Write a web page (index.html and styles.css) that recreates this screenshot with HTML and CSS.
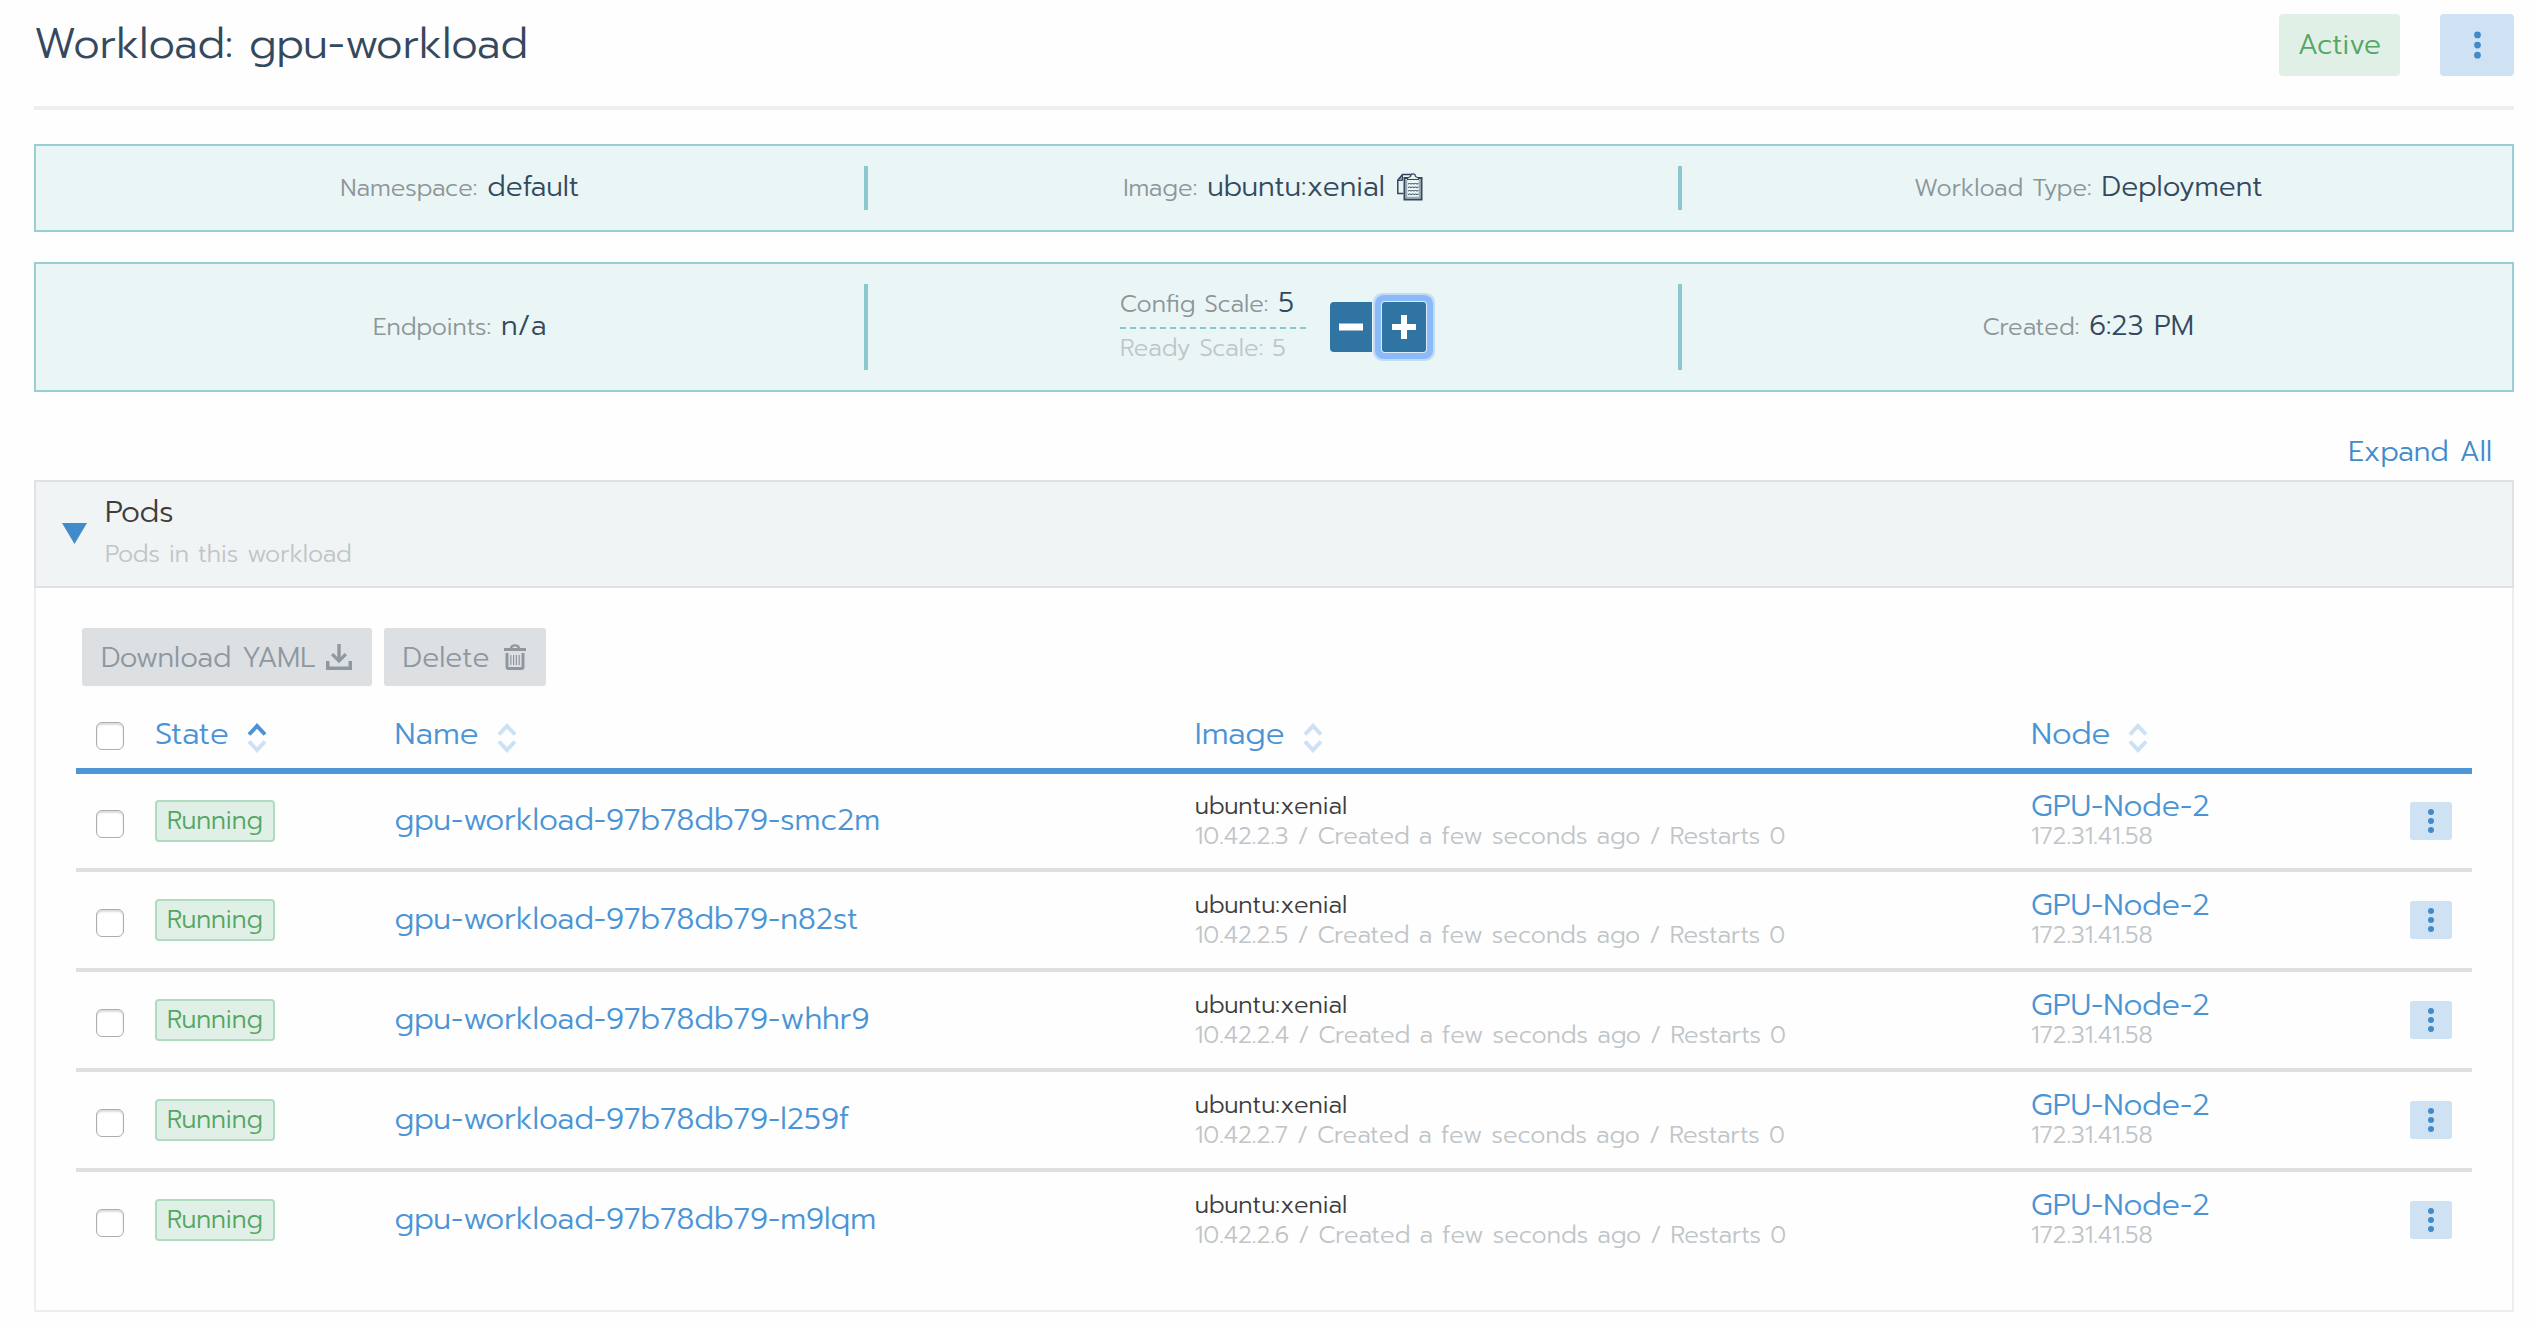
FILE: index.html
```html
<!DOCTYPE html>
<html lang="en">
<head>
<meta charset="utf-8">
<title>Workload: gpu-workload</title>
<meta name="viewport" content="width=device-width, initial-scale=1">
<link rel="stylesheet" href="styles.css">
</head>
<body>
<svg class="sprite" aria-hidden="true">
  <symbol id="dots" viewBox="0 0 8 28"><circle cx="4" cy="5" r="3"/><circle cx="4" cy="14" r="3"/><circle cx="4" cy="23" r="3"/></symbol>
  <symbol id="sort" viewBox="0 0 20 30"><path class="up" d="M2 11.500 10 3l8 8.500" fill="none" stroke-width="4"/><path class="down" d="M2 18.500 10 27l8-8.500" fill="none" stroke-width="4"/></symbol>
</svg>
<main class="page">
  <header class="page-header">
    <h1 class="title">Workload: gpu-workload</h1>
    <span class="state-active">Active</span>
    <button class="menu menu-large" type="button" aria-label="Workload actions"><svg class="dots dots-large"><use href="#dots"/></svg></button>
  </header>

  <section class="banner">
    <div class="cell"><div class="pair"><span class="label">Namespace:</span><span class="value">default</span></div></div>
    <div class="cell"><div class="pair"><span class="label">Image:</span><span class="value">ubuntu:xenial</span>
      <button class="copy" type="button" aria-label="Copy image name">
        <svg viewBox="0 0 26 28" width="26" height="28" fill="none" stroke="#35495e">
          <path d="M6.500 20.500H.8V7L5.500 1.500H15" stroke-width="1.500"/><path d="M1 7.500h4.500V2z" stroke-width="1" fill="#8b98a5"/>
          <path d="M7.500 5h17v21.500h-17z" stroke-width="2" fill="#eaf6f6"/>
          <path d="M9.500 7v17.500h13V7" stroke="#9aa8b3" stroke-width="1.500"/>
          <path d="M10.500 6.500h11V5l-3-1.500c0-3.500-5-3.500-5 0L10.500 5z" stroke-width="1.200" fill="#eaf6f6"/>
          <path d="M11 11l1.500-.5 1.500.5 1.500-.5 1.500.5 1.500-.5 1.500.5 1.500-.5M11 14.500l1.500-.5 1.500.5 1.500-.5 1.500.5 1.500-.5 1.500.5 1.500-.5M11 18l1.500-.5 1.500.5 1.500-.5 1.500.5 1.500-.5 1.500.5 1.500-.5M11 21.500l1.500-.5 1.500.5 1.500-.5 1.500.5 1.500-.5 1.500.5 1.500-.5"/>
        </svg>
      </button></div></div>
    <div class="cell"><div class="pair"><span class="label">Workload Type:</span><span class="value">Deployment</span></div></div>
  </section>

  <section class="banner">
    <div class="cell"><div class="pair"><span class="label">Endpoints:</span><span class="value">n/a</span></div></div>
    <div class="cell scale">
      <div class="scale-text">
        <div class="scale-config"><span class="label">Config Scale:</span><span class="value">5</span></div>
        <div class="scale-ready">Ready Scale: 5</div>
      </div>
      <div class="scale-buttons">
        <button class="step step-down" type="button" aria-label="Scale down"><svg viewBox="0 0 24 24" width="24" height="24"><path d="M0 8.500h24v7H0z"/></svg></button>
        <button class="step step-up" type="button" aria-label="Scale up"><svg viewBox="0 0 24 24" width="24" height="24"><path d="M9 0h6v9h9v6h-9v9H9v-9H0V9h9z"/></svg></button>
      </div>
    </div>
    <div class="cell"><div class="pair"><span class="label">Created:</span><span class="value">6:23 PM</span></div></div>
  </section>

  <div class="expand"><a href="#pods">Expand All</a></div>

  <section class="accordion" id="pods">
    <div class="accordion-header">
      <svg class="triangle" viewBox="0 0 25 21" width="25" height="21"><path d="M0 0h25L12.500 21z"/></svg>
      <div>
        <h2 class="accordion-title">Pods</h2>
        <p class="accordion-detail">Pods in this workload</p>
      </div>
    </div>
    <div class="accordion-body">
      <div class="toolbar">
        <button class="tool" type="button" disabled>Download YAML
          <svg viewBox="0 0 26 26" width="26" height="26"><path d="M11.300 0h3.400v13l4-4L21 11.300l-8 8-8-8L7.300 9l4 4z"/><path d="M0 17h3.500v5.500h19V17H26v9H0z"/></svg>
        </button>
        <button class="tool tool-delete" type="button" disabled>Delete
          <svg viewBox="0 0 22 26" width="22" height="26"><path fill-rule="evenodd" d="M0 4h6c0-5 10-5 10 0h6v3H0zM8.500 4h5c0-2-5-2-5 0zM1.500 9h19v14q0 3-3 3h-13q-3 0-3-3zM4.500 9v14h13V9z"/><path d="M6.200 11h1.200v10H6.200zM9 11h1.200v10H9zM11.800 11H13v10h-1.200zM14.600 11h1.200v10h-1.200z"/></svg>
        </button>
      </div>
      <table class="pods">
        <colgroup><col class="col-check"><col class="col-state"><col class="col-name"><col class="col-image"><col><col class="col-menu"></colgroup>
        <thead>
          <tr>
            <th class="check"><input type="checkbox" aria-label="Select all pods"></th>
            <th><button class="sort sort-asc" type="button"><span>State</span><svg><use href="#sort"/></svg></button></th>
            <th><button class="sort" type="button"><span>Name</span><svg><use href="#sort"/></svg></button></th>
            <th><button class="sort" type="button"><span>Image</span><svg><use href="#sort"/></svg></button></th>
            <th><button class="sort" type="button"><span>Node</span><svg><use href="#sort"/></svg></button></th>
            <th></th>
          </tr>
        </thead>
        <tbody>
          <tr>
            <td class="check"><input type="checkbox" aria-label="Select gpu-workload-97b78db79-smc2m"></td>
            <td><span class="badge">Running</span></td>
            <td><a class="name" href="#smc2m">gpu-workload-97b78db79-smc2m</a></td>
            <td><div class="image">ubuntu:xenial</div><div class="detail">10.42.2.3 / Created a few seconds ago / Restarts 0</div></td>
            <td><a class="node" href="#node">GPU-Node-2</a><div class="detail">172.31.41.58</div></td>
            <td class="actions"><button class="menu" type="button" aria-label="Pod actions"><svg class="dots"><use href="#dots"/></svg></button></td>
          </tr>
          <tr>
            <td class="check"><input type="checkbox" aria-label="Select gpu-workload-97b78db79-n82st"></td>
            <td><span class="badge">Running</span></td>
            <td><a class="name" href="#n82st">gpu-workload-97b78db79-n82st</a></td>
            <td><div class="image">ubuntu:xenial</div><div class="detail">10.42.2.5 / Created a few seconds ago / Restarts 0</div></td>
            <td><a class="node" href="#node">GPU-Node-2</a><div class="detail">172.31.41.58</div></td>
            <td class="actions"><button class="menu" type="button" aria-label="Pod actions"><svg class="dots"><use href="#dots"/></svg></button></td>
          </tr>
          <tr>
            <td class="check"><input type="checkbox" aria-label="Select gpu-workload-97b78db79-whhr9"></td>
            <td><span class="badge">Running</span></td>
            <td><a class="name" href="#whhr9">gpu-workload-97b78db79-whhr9</a></td>
            <td><div class="image">ubuntu:xenial</div><div class="detail">10.42.2.4 / Created a few seconds ago / Restarts 0</div></td>
            <td><a class="node" href="#node">GPU-Node-2</a><div class="detail">172.31.41.58</div></td>
            <td class="actions"><button class="menu" type="button" aria-label="Pod actions"><svg class="dots"><use href="#dots"/></svg></button></td>
          </tr>
          <tr>
            <td class="check"><input type="checkbox" aria-label="Select gpu-workload-97b78db79-l259f"></td>
            <td><span class="badge">Running</span></td>
            <td><a class="name" href="#l259f">gpu-workload-97b78db79-l259f</a></td>
            <td><div class="image">ubuntu:xenial</div><div class="detail">10.42.2.7 / Created a few seconds ago / Restarts 0</div></td>
            <td><a class="node" href="#node">GPU-Node-2</a><div class="detail">172.31.41.58</div></td>
            <td class="actions"><button class="menu" type="button" aria-label="Pod actions"><svg class="dots"><use href="#dots"/></svg></button></td>
          </tr>
          <tr>
            <td class="check"><input type="checkbox" aria-label="Select gpu-workload-97b78db79-m9lqm"></td>
            <td><span class="badge">Running</span></td>
            <td><a class="name" href="#m9lqm">gpu-workload-97b78db79-m9lqm</a></td>
            <td><div class="image">ubuntu:xenial</div><div class="detail">10.42.2.6 / Created a few seconds ago / Restarts 0</div></td>
            <td><a class="node" href="#node">GPU-Node-2</a><div class="detail">172.31.41.58</div></td>
            <td class="actions"><button class="menu" type="button" aria-label="Pod actions"><svg class="dots"><use href="#dots"/></svg></button></td>
          </tr>
        </tbody>
      </table>
    </div>
  </section>
</main>
</body>
</html>
```
FILE: styles.css
```css
*, *::before, *::after { box-sizing: border-box; }
body {
  margin: 0;
  background: #fefefe;
  color: #3d3d3d;
  font-family: Prompt, "Noto Sans", sans-serif;
  font-size: 24px;
  font-weight: 300;
}
button { font: inherit; border: 0; padding: 0; background: none; }
a { color: #4a94d6; text-decoration: none; }
svg { display: block; flex: none; }
.sprite { position: absolute; width: 0; height: 0; }
.page { padding: 14px 22px 14px 34px; }

.page-header {
  display: flex;
  align-items: flex-start;
  padding-bottom: 30px;
  border-bottom: 4px solid #eceff0;
}
.title {
  flex: 1;
  margin: 0;
  color: #35495e;
  font-size: 42px;
  font-weight: 300;
  line-height: 60px;
}
.state-active {
  padding: 0 19px;
  border-radius: 4px;
  background: #e1f0e6;
  color: #53a663;
  font-size: 28px;
  line-height: 62px;
}
.menu {
  display: inline-flex;
  align-items: center;
  justify-content: center;
  width: 42px;
  height: 38px;
  border-radius: 3px;
  background: #cfe2f4;
  vertical-align: middle;
}
.dots { width: 8px; height: 28px; fill: #428bca; }
.menu-large { width: 74px; height: 62px; margin-left: 40px; border-radius: 4px; }
.dots-large { width: 9px; height: 32px; }

.banner {
  display: grid;
  grid-template-columns: repeat(3, 1fr);
  margin-top: 34px;
  padding: 20px 17px 20px 19px;
  border: 2px solid #99cfd3;
  background: #eaf6f6;
}
.banner + .banner { margin-top: 30px; }
.cell { display: flex; align-items: center; justify-content: center; min-height: 44px; border-right: 4px solid #8bc8cd; }
.cell:last-child { border-right: 0; }
.pair { display: flex; align-items: baseline; gap: 10px; padding-bottom: 2px; line-height: 38px; }
.label { color: #8d9599; }
.value { color: #35495e; font-size: 28px; }
.copy { align-self: center; margin-left: 2px; }
.scale { gap: 24px; }
.scale-text { width: 186px; padding-bottom: 3px; line-height: 38px; white-space: nowrap; }
.scale-config { display: flex; align-items: baseline; gap: 10px; padding-bottom: 4px; border-bottom: 2px dashed #8bc8cd; }
.scale-ready { color: #bfc5c8; }
.scale-buttons { display: flex; gap: 10px; }
.step { display: flex; align-items: center; justify-content: center; width: 42px; height: 50px; background: #2f74a3; }
.step svg { fill: #fff; }
.step-down { border-radius: 4px 0 0 4px; }
.step-up { width: 44px; border-radius: 3px; box-shadow: 0 0 0 1px #dbeafc, 0 0 0 7px #8bbaf8, 0 0 0 9px #c3dbf6; }

.expand { margin-top: 42px; padding: 0 22px 10px; text-align: right; font-size: 28px; line-height: 36px; }
.expand a { color: #428bca; }

.accordion-header {
  display: flex;
  align-items: center;
  gap: 18px;
  padding: 11px 26px 9px;
  border: 2px solid #dee2e5;
  background: #f0f4f5;
}
.triangle { margin-bottom: 4px; fill: #428bca; }
.accordion-title { margin: 0; font-size: 30px; font-weight: 300; line-height: 38px; }
.accordion-detail { margin: 0; color: #bfc5c8; line-height: 46px; }
.accordion-body { padding: 40px 40px 42px; border: 2px solid #ebeff0; border-top: 0; }
.toolbar { display: flex; gap: 12px; padding-left: 6px; }
.tool {
  display: flex;
  align-items: center;
  gap: 10px;
  height: 58px;
  padding: 0 20px 0 19px;
  border-radius: 3px;
  background: #dce0e3;
  color: #8f989f;
  font-size: 28px;
}
.tool-delete { gap: 14px; }
.tool svg { fill: #8f989f; }

.pods { width: 100%; border-collapse: separate; border-spacing: 0; table-layout: fixed; }
.col-check { width: 79px; }
.col-state { width: 10%; }
.col-name { width: 33.4%; }
.col-image { width: 34.9%; }
.col-menu { width: 80px; }
.pods th { height: 88px; padding: 18px 0 0; border-bottom: 6px solid #4f96d7; text-align: left; font-weight: 300; }
.pods td { height: 100px; padding: 0; border-bottom: 4px solid #dedfe1; line-height: 30px; }
.pods tbody tr:first-child td { height: 98px; }
.pods tbody tr:last-child td { height: 96px; border-bottom: 0; }
.pods .check { padding-left: 20px; }
.pods td.check { padding-top: 5px; }
.check input {
  display: block;
  appearance: none;
  width: 28px;
  height: 28px;
  margin: 0;
  border: 1px solid #adadad;
  border-radius: 6px;
  background: #fff;
  box-shadow: inset 0 2px 2px #dcdcdc;
}
.sort { display: flex; align-items: center; gap: 18px; color: #4a94d6; font-size: 31px; line-height: 40px; }
.sort span { padding-bottom: 4px; }
.sort svg { width: 20px; height: 30px; margin-top: 4px; stroke: #cde1f4; }
.sort-asc svg { --up: #4a94d6; }
.up { stroke: var(--up, #cde1f4); }
.badge {
  display: inline-block;
  padding: 0 10px;
  border: 2px solid #afdcc1;
  border-radius: 4px;
  background: #e1f0e6;
  color: #53a663;
  font-size: 25px;
  line-height: 38px;
  vertical-align: middle;
}
.name { display: block; padding-bottom: 3px; font-size: 30px; }
.node { display: block; font-size: 30px; }
.detail { color: #bfc5c8; }
.pods .actions { padding-right: 20px; text-align: right; }
```
